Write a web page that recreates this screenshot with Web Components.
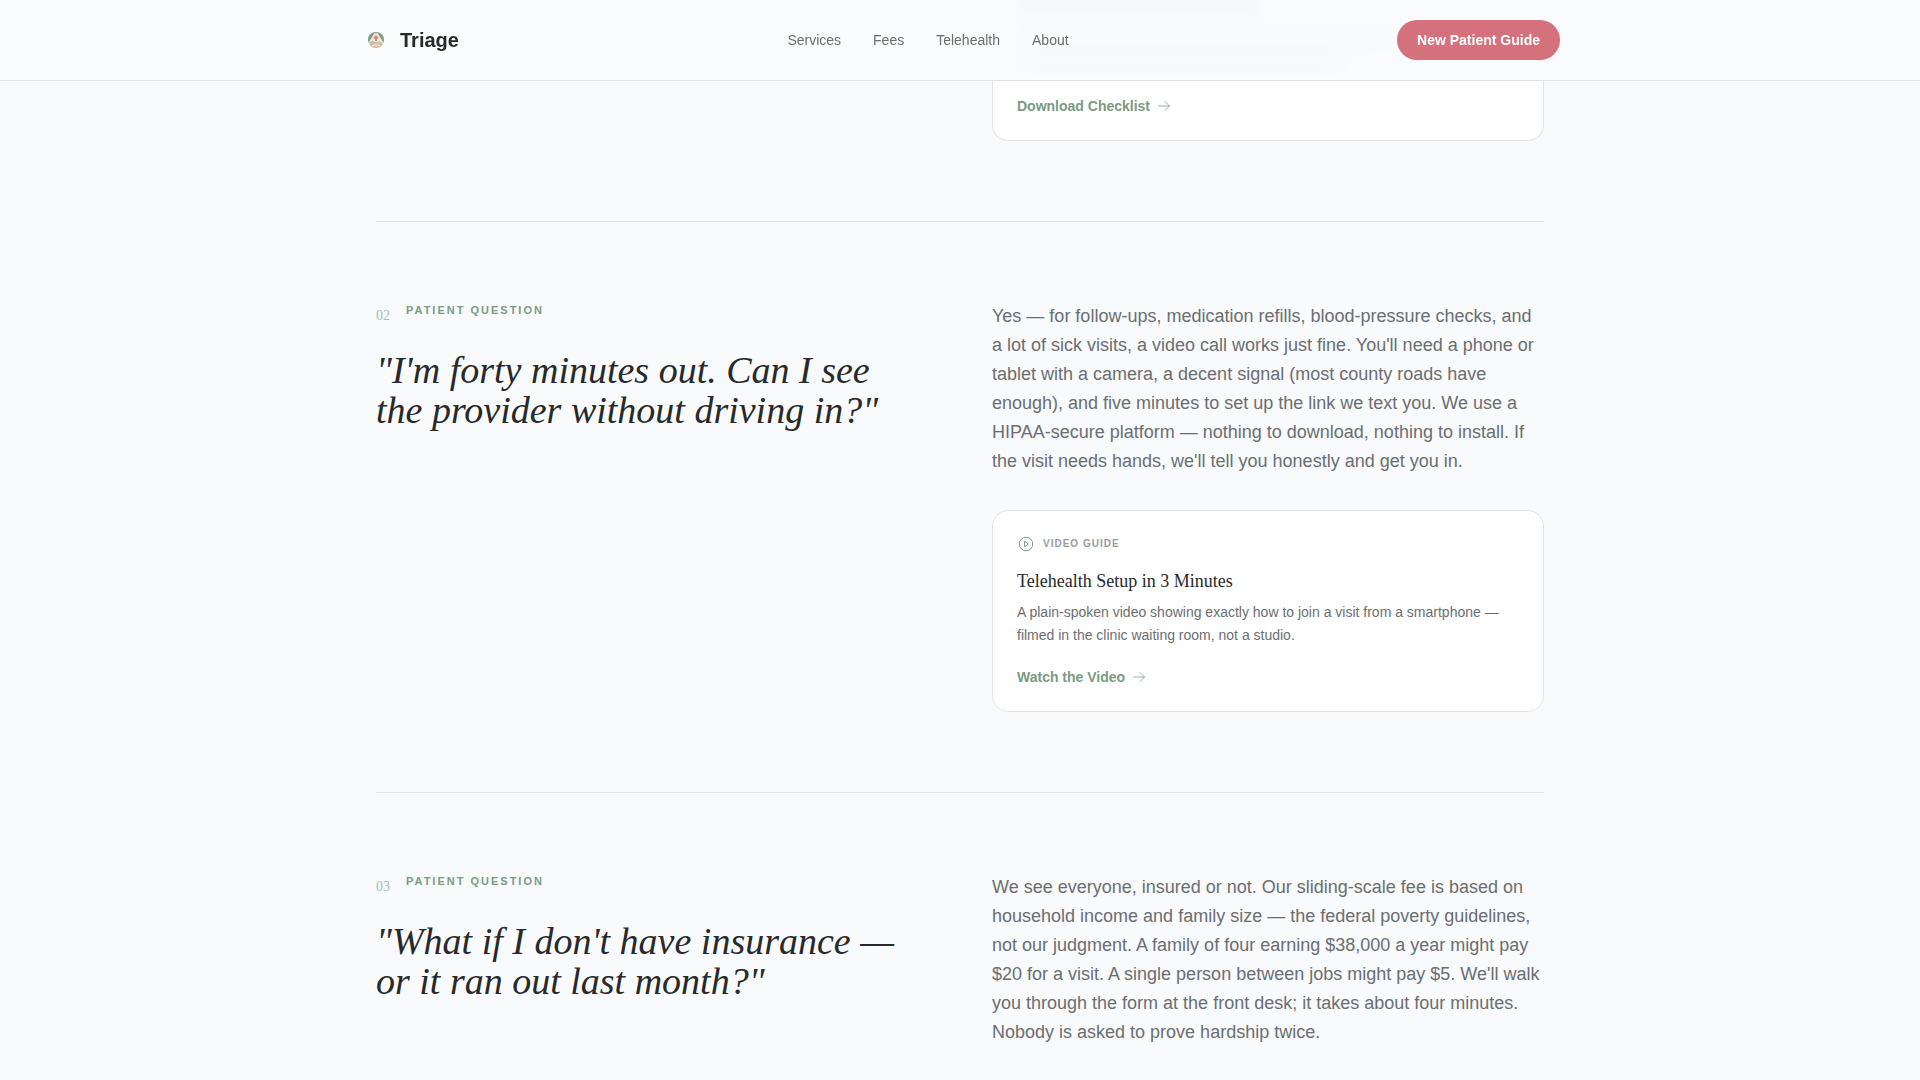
<!DOCTYPE html>
<html lang="en">
<head>
<meta charset="utf-8">
<title>Triage</title>
<style>
:root{
  --page:#f8fafc; --ink:#27292b; --body:#6b6e71; --muted:#999da0; --green:#7a9a82;
  --green-soft:#a9bfb1; --rose:#d4717d; --line:#e1e4e7;
  --sans:"Liberation Sans",Arial,sans-serif; --serif:"Liberation Serif","Times New Roman",serif;
}
body{margin:0;background:var(--page);color:var(--ink);font-family:var(--sans)}
main{display:block;max-width:1168px;margin:-81px auto 0;padding:0 16px}
</style>
</head>
<body>
<site-header>
  <a slot="nav" href="#services">Services</a>
  <a slot="nav" href="#fees">Fees</a>
  <a slot="nav" href="#telehealth">Telehealth</a>
  <a slot="nav" href="#about">About</a>
  <span slot="cta">New Patient Guide</span>
</site-header>
<main>
  <question-row continued>
    <resource-card continued><span slot="action">Download Checklist</span></resource-card>
  </question-row>
  <question-row>
    <span slot="number">02</span>
    <span slot="label">PATIENT QUESTION</span>
    <span slot="question">"I'm forty minutes out. Can I see the provider without driving in?"</span>
    <span slot="answer">Yes — for follow-ups, medication refills, blood-pressure checks, and a lot of sick visits, a video call works just fine. You'll need a phone or tablet with a camera, a decent signal (most county roads have enough), and five minutes to set up the link we text you. We use a HIPAA-secure platform — nothing to download, nothing to install. If the visit needs hands, we'll tell you honestly and get you in.</span>
    <resource-card>
      <span slot="kind">VIDEO GUIDE</span>
      <span slot="title">Telehealth Setup in 3 Minutes</span>
      <span slot="text">A plain-spoken video showing exactly how to join a visit from a smartphone — filmed in the clinic waiting room, not a studio.</span>
      <span slot="action">Watch the Video</span>
    </resource-card>
  </question-row>
  <question-row last>
    <span slot="number">03</span>
    <span slot="label">PATIENT QUESTION</span>
    <span slot="question">"What if I don't have insurance — or it ran out last month?"</span>
    <span slot="answer">We see everyone, insured or not. Our sliding-scale fee is based on household income and family size — the federal poverty guidelines, not our judgment. A family of four earning $38,000 a year might pay $20 for a visit. A single person between jobs might pay $5. We'll walk you through the form at the front desk; it takes about four minutes. Nobody is asked to prove hardship twice.</span>
  </question-row>
</main>
<script>
const define = (name, render) => customElements.define(name, class extends HTMLElement {
  connectedCallback() {
    if (!this.shadowRoot) this.attachShadow({mode: 'open'}).innerHTML = render(this);
  }
});

define('triage-mark', () => `
<style>:host{display:flex;width:32px;height:32px;align-items:center;justify-content:center}svg{display:block}</style>
<svg width="16" height="16" viewBox="0 0 32 32" aria-hidden="true">
  <defs><clipPath id="disc"><circle cx="16" cy="16" r="16"/></clipPath></defs>
  <g clip-path="url(#disc)">
    <rect width="32" height="32" fill="#f1e9dd"/>
    <path d="M0 20V0H14L2 20Z M32 20V0H18L30 20Z" fill="#7b9c83"/>
    <path d="M2 21L14 3M30 21L18 3" stroke="#c9d6c8" stroke-width="1"/>
    <path d="M9 0H23L16 3Z" fill="#93ab94"/>
    <path d="M16 6L22 13H18V18H14V13H10Z" fill="#df8273"/>
    <path d="M0 20Q8 16 16 20T32 20V32H0Z" fill="#d8cdb9"/>
    <path d="M5 21Q11 18 16 22Q21 18 27 21M4 25Q11 22 16 26Q21 22 28 25" fill="none" stroke="#aaa797" stroke-width="1.5"/>
    <path d="M1 25Q16 33 31 25V32H0Z" fill="#e8bd98"/>
    <path d="M8 27Q16 24 24 27" fill="none" stroke="#f6eadb" stroke-width="2"/>
  </g>
</svg>`);

define('arrow-icon', () => `
<style>:host{display:block;width:16px;height:16px}svg{display:block}</style>
<svg width="16" height="16" viewBox="0 0 256 256" fill="none" stroke="currentColor" stroke-width="12" stroke-linecap="round" stroke-linejoin="round" aria-hidden="true"><path d="M40 128H216M144 56L216 128L144 200"/></svg>`);

define('play-icon', () => `
<style>:host{display:block;width:18px;height:18px}svg{display:block}</style>
<svg width="18" height="18" viewBox="0 0 256 256" fill="none" stroke="currentColor" stroke-width="14" stroke-linejoin="round" aria-hidden="true"><circle cx="128" cy="128" r="96"/><path d="M108 88L166 128L108 168Z"/></svg>`);

define('site-header', () => `
<style>
:host{display:block;position:sticky;top:0;z-index:10;background:rgba(250,251,252,.9);backdrop-filter:blur(12px);border-bottom:1px solid var(--line)}
.bar{display:flex;align-items:center;justify-content:space-between;max-width:1200px;height:80px;margin:0 auto}
.brand{display:flex;align-items:center;gap:8px;font-size:20px;font-weight:700;line-height:28px;color:var(--ink);text-decoration:none}
nav{display:flex;gap:32px;font-size:14px;line-height:20px}
::slotted(a){color:var(--body);text-decoration:none}
.cta{padding:10px 20px;border-radius:20px;background:var(--rose);color:#fff;font-size:14px;font-weight:700;line-height:20px;text-decoration:none}
</style>
<div class="bar">
  <a class="brand" href="#top"><triage-mark></triage-mark>Triage</a>
  <nav><slot name="nav"></slot></nav>
  <a class="cta" href="#guide"><slot name="cta"></slot></a>
</div>`);

define('question-row', el => `
<style>
:host{display:grid;grid-template-columns:1fr 1fr;gap:64px;padding:80px 0;border-bottom:1px solid var(--line)}
:host([continued]){padding-top:0}
:host([last]){padding-bottom:24px;border-bottom:0}
.eyebrow{display:flex;align-items:flex-start;gap:16px}
.number{padding-top:4px;font-family:var(--serif);font-size:14px;line-height:20px;color:var(--green-soft)}
.label{font-size:11px;font-weight:700;line-height:16px;letter-spacing:2px;color:var(--green)}
h2{margin:24px 0 0;padding-right:16px;font-family:var(--serif);font-size:38px;font-style:italic;font-weight:400;line-height:40px;color:var(--ink)}
p{margin:0 0 34px;font-size:18px;line-height:29px;color:var(--body)}
:host([last]) p{margin:0}
</style>
<div>${el.hasAttribute('continued') ? '' : `
  <div class="eyebrow"><span class="number"><slot name="number"></slot></span><span class="label"><slot name="label"></slot></span></div>
  <h2><slot name="question"></slot></h2>`}
</div>
<div>${el.hasAttribute('continued') ? '' : '<p><slot name="answer"></slot></p>'}<slot></slot></div>`);

define('resource-card', el => `
<style>
:host{display:block;padding:24px;border:1px solid var(--line);border-radius:16px;background:#fff}
:host([continued]){padding-top:0;border-top:0;border-radius:0 0 16px 16px}
.kind{display:flex;align-items:center;gap:8px;color:var(--green);font-size:10px;font-weight:700;line-height:18px}
.kind span{color:var(--muted);letter-spacing:1px}
h3{margin:15px 0 6px;font-family:var(--serif);font-size:18px;font-weight:400;line-height:27px;color:var(--ink)}
p{margin:0 0 20px;font-size:14px;line-height:23px;color:var(--body)}
.action{display:flex;align-items:center;gap:6px;font-size:14px;font-weight:700;line-height:20px;color:var(--green);text-decoration:none}
.bars{display:grid;gap:10px;padding-bottom:26px}
.bars i{height:14px;background:#cfd1d3}
.bars i:nth-child(1){width:48%}
.bars i:nth-child(2){width:88%;margin-top:8px;background:#dcdee0}
.bars i:nth-child(3){width:66%;background:#dcdee0}
</style>
${el.hasAttribute('continued') ? '<div class="bars" aria-hidden="true"><i></i><i></i><i></i></div>' : `
<div class="kind"><play-icon></play-icon><span><slot name="kind"></slot></span></div>
<h3><slot name="title"></slot></h3>
<p><slot name="text"></slot></p>`}
<a class="action" href="#resource"><slot name="action"></slot><arrow-icon></arrow-icon></a>`);
</script>
</body>
</html>
